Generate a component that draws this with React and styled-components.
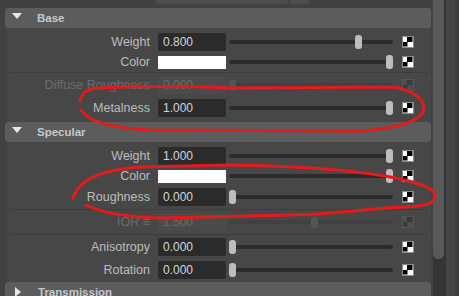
import React from 'react'
import styled, { createGlobalStyle } from 'styled-components'

const GlobalStyle = createGlobalStyle`
  body {
    margin: 0;
    background: #414141;
    font-family: "Liberation Sans", Arial, sans-serif;
  }
`

const Window = styled.div`
  position: relative;
  width: 459px;
  height: 296px;
  overflow: hidden;
  display: flex;
  background: #414141;
`
const Main = styled.div`
  width: 431px;
  flex-shrink: 0;
`
const TopStrip = styled.div`
  height: 8px;
  display: flex;
  gap: 2px;
  padding-left: 156px;
`
const TopField = styled.div`
  width: ${p => p.$w}px;
  height: 4px;
  background: #4d4d4d;
  border-radius: 0 0 2px 2px;
`
const Header = styled.div`
  height: 20px;
  margin-left: 5px;
  display: flex;
  align-items: center;
  background: #5c5c5c;
  border-radius: 3px;
  color: #c4c8cc;
  font-size: 11.5px;
  font-weight: bold;
`
const Arrow = styled.div`
  width: 0;
  height: 0;
  margin-left: ${p => (p.$open ? 7 : 10)}px;
  margin-right: ${p => (p.$open ? 15 : 17)}px;
  margin-top: ${p => (p.$open ? -4 : 0)}px;
  border-style: solid;
  border-color: transparent;
  ${p => p.$open
    ? 'border-width: 6px 5.5px 0 5.5px; border-top-color: #e8e8e8;'
    : 'border-width: 5px 0 5px 6px; border-left-color: #e8e8e8;'}
`
const Body = styled.div`
  margin-left: 7px;
  padding-top: 2px;
  padding-bottom: ${p => p.$pb}px;
  background: #474747;
`
const Row = styled.div`
  height: ${p => (p.$short ? 18 : 23)}px;
  display: flex;
  align-items: center;
  font-size: 12px;
`
const Label = styled.div`
  width: 151px;
  box-sizing: border-box;
  padding-right: 8px;
  text-align: right;
  white-space: nowrap;
  font-size: 12.5px;
  color: ${p => (p.$off ? '#6c6c6c' : '#bcbcbc')};
`
const Field = styled.div`
  width: 68px;
  height: 18px;
  box-sizing: border-box;
  padding-left: 5px;
  display: flex;
  align-items: center;
  border-radius: 2px;
  background: ${p => (p.$off ? '#4b4b4b' : '#2b2b2b')};
  color: ${p => (p.$off ? '#6c6c6c' : '#d2d6da')};
`
const Swatch = styled.div`
  width: 68px;
  height: 13px;
  background: #ffffff;
`
const Slider = styled.div`
  position: relative;
  width: 164px;
  height: 14px;
  margin-left: 3px;
  display: flex;
  align-items: center;
`
const Track = styled.div`
  width: 100%;
  height: 4px;
  border-radius: 2px;
  background: ${p => (p.$off ? '#414141' : '#2c2c2c')};
`
const Thumb = styled.div`
  position: absolute;
  top: ${p => (p.$off ? 2 : 0)}px;
  width: 7px;
  height: ${p => (p.$off ? 11 : 14)}px;
  border-radius: 3px;
  background: ${p => (p.$off ? '#555555' : '#bdbdbd')};
`
const CheckBox = styled.svg`
  margin-left: 9px;
  flex-shrink: 0;
`
const Sep = styled.div`
  height: 1px;
  margin: 1px 3px 0 2px;
  background: #3e3e3e;
`
const ScrollTrack = styled.div`
  width: 13px;
  margin-left: 2px;
  background: #353535;
`
const ScrollThumb = styled.div`
  width: 11px;
  height: 259px;
  background: #595959;
  border-radius: 0 0 5px 5px;
`
const Edge = styled.div`
  flex: 1;
  background: #464646;
  border-right: 4px solid #3c3c3c;
`
const Marks = styled.svg`
  position: absolute;
  left: 0;
  top: 0;
  pointer-events: none;
`

function Checker({ off }) {
  const light = off ? '#4e4e4e' : '#ffffff'
  const dark = off ? '#3a3a3a' : '#000000'
  return (
    <CheckBox width="12" height="12" viewBox="0 0 12 12">
      <rect x="0.5" y="0.5" width="11" height="11" fill={light} stroke={off ? '#555' : '#8a8a8a'} />
      <rect x="5" y="1" width="5.5" height="5" fill={dark} />
      <rect x="1" y="6" width="4.5" height="4.5" fill={dark} />
    </CheckBox>
  )
}

function Attr({ label, value, pos, off }) {
  return (
    <Row>
      <Label $off={off}>{label}</Label>
      <Field $off={off}>{value}</Field>
      <Slider>
        <Track $off={off} />
        <Thumb $off={off} style={{ left: `${pos * 157}px` }} />
      </Slider>
      <Checker off={off} />
    </Row>
  )
}

function ColorAttr() {
  return (
    <Row $short>
      <Label>Color</Label>
      <Swatch />
      <Slider>
        <Track />
        <Thumb style={{ left: '157px' }} />
      </Slider>
      <Checker />
    </Row>
  )
}

export default function App() {
  return (
    <Window>
      <GlobalStyle />
      <Main>
        <TopStrip>
          <TopField $w={132} />
          <TopField $w={19} />
        </TopStrip>

        <Header><Arrow $open />Base</Header>
        <Body $pb={3}>
          <Attr label="Weight" value="0.800" pos={0.8} />
          <ColorAttr />
          <Sep />
          <Attr label="Diffuse Roughness" value="0.000" pos={0} off />
          <Attr label="Metalness" value="1.000" pos={1} />
        </Body>

        <Header><Arrow $open />Specular</Header>
        <Body $pb={1}>
          <Attr label="Weight" value="1.000" pos={1} />
          <ColorAttr />
          <Attr label="Roughness" value="0.000" pos={0} />
          <Sep />
          <Attr label="IOR ≡" value="1.500" pos={0.52} off />
          <Sep />
          <Attr label="Anisotropy" value="0.000" pos={0} />
          <Attr label="Rotation" value="0.000" pos={0} />
        </Body>

        <Header><Arrow />Transmission</Header>
      </Main>
      <ScrollTrack><ScrollThumb /></ScrollTrack>
      <Edge />

      <Marks width="459" height="296" viewBox="0 0 459 296" fill="none" stroke="#e41b1b" strokeWidth="3" strokeLinecap="round">
        <path d="M80 101 C82 93 86 89 100 88 C140 86 180 86 230 88 L392 87 C410 89 424 98 424 108 C423 120 400 128 362 131 L150 130 C110 128 88 121 81 110" />
        <path d="M73 198 C78 183 92 171 140 167 L230 165 C300 166 350 170 385 176 C412 181 432 186 435 194 C436 204 426 206 405 207 C370 208 340 214 290 215 L160 218 C125 217 100 212 86 205" />
      </Marks>
    </Window>
  )
}
